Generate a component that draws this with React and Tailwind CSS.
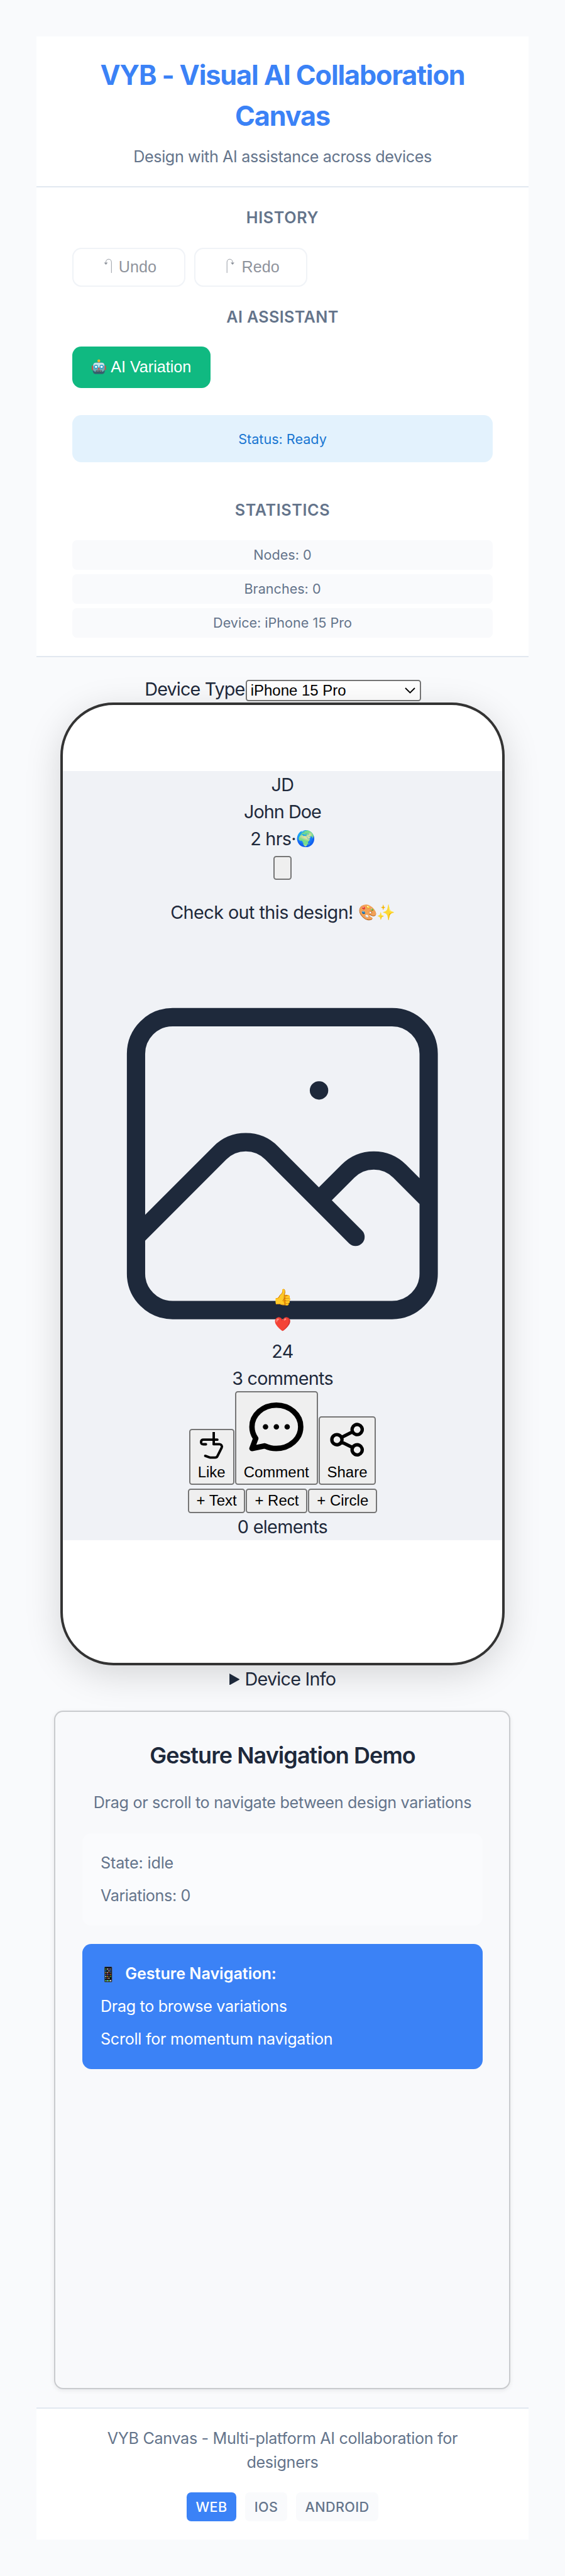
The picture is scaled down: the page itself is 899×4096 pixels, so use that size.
const heading =
  "text-center text-[25.17px] leading-[37.76px] font-semibold text-[#64748b] uppercase";
const stat =
  "h-[46.75px] rounded-[7.2px] bg-[#f9fafc] text-center text-[21.58px] leading-[47.4px] text-[#64748b]";
const row = "flex h-[43.15px] items-center justify-center";
const native =
  "rounded-[4.5px] border-2 border-[#767676] bg-[#efefef] font-['Liberation_Sans',Arial,sans-serif] text-[23.97px] text-black";

function Robot() {
  return (
    <svg className="h-[24px] w-[22.5px] shrink-0" viewBox="0 0 25 26" aria-hidden="true">
      <rect x="0" y="11" width="3" height="8" rx="1" fill="#e0453a" />
      <rect x="22" y="11" width="3" height="8" rx="1" fill="#e0453a" />
      <path d="M10 5h5v3h-5z" fill="#7a4a8c" />
      <circle cx="12.5" cy="2.6" r="2.5" fill="#f4b62c" />
      <rect x="2" y="6" width="21" height="20" rx="5" fill="#35616f" />
      <rect x="2" y="6" width="21" height="16" rx="5" fill="#6fa9b4" />
      <rect x="3" y="6" width="19" height="8" rx="4" fill="#c4e4e6" />
      <circle cx="7.6" cy="13.3" r="3.6" fill="#27a0c9" />
      <circle cx="17.4" cy="13.3" r="3.6" fill="#27a0c9" />
      <circle cx="7.6" cy="13.3" r="2" fill="#fff" />
      <circle cx="17.4" cy="13.3" r="2" fill="#fff" />
      <path d="M12.5 14l2 4h-4z" fill="#e0453a" />
      <rect x="7.5" y="19.5" width="10" height="2.6" rx="1" fill="#3a3337" />
      <path d="M9.5 19.7v2.2M12.5 19.7v2.2M15.5 19.7v2.2" stroke="#d8e4e4" strokeWidth="1" />
    </svg>
  );
}

const APP_COLORS = [
  ["#4cd137", "#fff", "#b57edc", "#9aa0a6"],
  ["#26a4f5", "#555", "#e8ecf0", "#3b82f6"],
  ["#f5b041", "#f3f3f3", "#e74c3c", "#777"],
  ["#3498db", "#e83ea8", "#3a5fcd", "#f97316"],
  ["#f6f6f6", "#f1c40f", "#666", "#4cd137"],
  ["#26a4f5", "#e74c3c", "#fff", "#111"],
];

function Phone() {
  return (
    <svg className="h-[25px] w-[12.4px] shrink-0" viewBox="0 0 14 28" aria-hidden="true">
      <rect x="0.4" y="0.4" width="13.2" height="27.2" rx="1.4" fill="#0b0b0d" stroke="#54504c" strokeWidth="0.8" />
      {APP_COLORS.map((line, y) =>
        line.map((fill, x) => (
          <rect key={`${x}-${y}`} x={1.6 + x * 2.9} y={3.4 + y * 3.3} width="1.9" height="1.8" rx="0.4" fill={fill} />
        ))
      )}
      <rect x="1.4" y="23.8" width="11.2" height="2.8" fill="#3d4a4a" />
      <path d="M1.6 25.2h2M7.4 25.2h2" stroke="#4cd137" strokeWidth="2" />
      <path d="M4.5 25.2h2" stroke="#5ac8fa" strokeWidth="2" />
      <path d="M10.3 25.2h2" stroke="#fff" strokeWidth="2" />
    </svg>
  );
}

function HookArrow({ flip }) {
  return (
    <svg
      className={flip ? "h-[23.4px] w-[13.5px] shrink-0 -scale-x-100" : "h-[23.4px] w-[13.5px] shrink-0"}
      viewBox="0 0 15 26"
      fill="none"
      stroke="currentColor"
      aria-hidden="true"
    >
      <path d="M13.7 25.5V6.5C13.7 3 11.5 1.3 8.8 1.3S3.9 3 3.9 6.5v1" strokeWidth="1" />
      <path d="M.6 7.2h6.6L3.9 11z" fill="currentColor" stroke="none" />
    </svg>
  );
}

function Header() {
  return (
    <header className="h-[240.93px] border-b-2 border-[#e2e8f0] bg-white pt-[29.5px] text-center">
      <h1 className="text-[43.15px] leading-[64.73px] font-bold tracking-[-0.026em] text-[#3b82f6]">
        VYB - Visual AI Collaboration
        <br />
        Canvas
      </h1>
      <p className="mt-[14.38px] text-[25.17px] leading-[37.76px] tracking-[-0.0147em] text-[#64748b]">
        Design with AI assistance across devices
      </p>
    </header>
  );
}

function HistoryButton({ label, flip, pad }) {
  return (
    <button
      className={`flex h-[62.48px] w-[179.8px] items-center gap-[10.8px] rounded-[14.4px] border-2 border-[#e2e8f0] bg-white font-['Liberation_Sans',Arial,sans-serif] text-[25.17px] text-[#1e293b] opacity-50 ${pad}`}
    >
      <span className="-mt-[4px] flex">
        <HookArrow flip={flip} />
      </span>
      {label}
    </button>
  );
}

function Controls() {
  return (
    <section className="flex h-[746.17px] flex-col border-b-2 border-[#e2e8f0] bg-white px-[57.54px] pt-[29.4px]">
      <h3 className={`${heading} tracking-[0.025em]`}>History</h3>
      <div className="mt-[28.14px] flex gap-[14.38px]">
        <HistoryButton label="Undo" pad="pl-[47.5px]" />
        <HistoryButton label="Redo" flip pad="pl-[49px]" />
      </div>
      <h3 className={`${heading} mt-[29.4px] tracking-[0.0142em]`}>AI Assistant</h3>
      <button className="mt-[28.14px] flex h-[65.18px] w-[220.3px] items-center gap-[7.2px] rounded-[14.4px] bg-[#10b981] pl-[31.4px] font-['Liberation_Sans',Arial,sans-serif] text-[25.17px] whitespace-nowrap text-white">
        <span className="-mt-[3px] flex">
          <Robot />
        </span>
        AI Variation
      </button>
      <div className="mt-[43.15px] h-[75.5px] rounded-[14.4px] bg-[#e3f2fd] text-center text-[21.58px] leading-[76px] text-[#1976d2]">
        Status: Ready
      </div>
      <h3 className={`${heading} mt-[58.2px] tracking-[0.025em]`}>Statistics</h3>
      <div className="mt-[28.14px] flex flex-col gap-[7.19px]">
        <div className={stat}>Nodes: 0</div>
        <div className={stat}>Branches: 0</div>
        <div className={stat}>Device: iPhone 15 Pro</div>
      </div>
    </section>
  );
}

function DeviceSelect() {
  return (
    <div className="flex h-[43.15px] items-center justify-center">
      <span className="w-[161.4px] pt-[1px] pl-[1px] tracking-[-0.0301em] whitespace-nowrap">Device Type</span>
      <div className="mt-[5.4px] flex h-[34px] w-[279px] items-center justify-between rounded-[4.5px] border-2 border-[#767676] bg-white pr-[6.5px] pl-[6px] font-['Liberation_Sans',Arial,sans-serif] text-[23.97px] leading-none text-black">
        iPhone 15 Pro
        <svg className="h-[10px] w-[17px]" viewBox="0 0 17 10" fill="none" stroke="currentColor" strokeWidth="1.8">
          <path d="M1 1l7.5 7.4L16 1" />
        </svg>
      </div>
    </div>
  );
}

function PhotoIcon() {
  return (
    <svg
      className="size-[698.5px] shrink-0"
      viewBox="0 0 24 24"
      fill="none"
      stroke="currentColor"
      strokeWidth="1"
      strokeLinecap="round"
      strokeLinejoin="round"
    >
      <path d="M4 16l4.586-4.586a2 2 0 012.828 0L16 16m-2-2l1.586-1.586a2 2 0 012.828 0L20 14m-6-6h.01M6 20h12a2 2 0 002-2V6a2 2 0 00-2-2H6a2 2 0 00-2 2v12a2 2 0 002 2z" />
    </svg>
  );
}

function ActionIcon({ className, d }) {
  return (
    <svg
      className={className}
      viewBox="0 0 24 24"
      fill="none"
      stroke="currentColor"
      strokeWidth="2"
      strokeLinecap="round"
      strokeLinejoin="round"
    >
      {d.map((path) => (
        <path key={path} d={path} />
      ))}
    </svg>
  );
}

function Post() {
  return (
    <div className="h-[1222.64px] bg-[#f0f2f6]">
      <div className={`${row} tracking-[-0.025em]`}>JD</div>
      <div className={`${row} tracking-[-0.0338em]`}>John Doe</div>
      <div className={`${row} gap-px`}>
        <span className="tracking-[-0.025em]">2 hrs·</span>
        <span className="flex w-[29px] justify-center text-[24.8px]">🌍</span>
      </div>
      <div className="flex h-[73.7px] justify-center pt-[5.7px]">
        <button className={`${native} h-[38.2px] w-[28.8px]`} aria-label="More" />
      </div>
      <p className={`${row} mb-[28.77px]`}>
        <span className="tracking-[-0.0195em]">Check out this design!</span>
        <span className="ml-[8.5px] flex w-[29px] justify-center text-[24.3px]">🎨</span>
        <span className="flex w-[28.5px] justify-center text-[23.9px]">✨</span>
      </p>
      <div className="flex h-[539.4px] items-start justify-center">
        <PhotoIcon />
      </div>
      <div className={`${row} relative text-[25px]`}>👍</div>
      <div className={`${row} relative text-[21.8px]`}>❤️</div>
      <div className={`${row} tracking-[-0.025em]`}>24</div>
      <div className={`${row} tracking-[-0.0254em]`}>3 comments</div>
      <div className="flex h-[148.3px] items-end justify-center gap-px">
        <button className={`${native} flex h-[89px] w-[72px] flex-col items-center justify-between pt-[2.2px] pb-[5px]`}>
          <ActionIcon
            className="size-[46.4px]"
            d={[
              "M14 10h4.764a2 2 0 011.789 2.894l-3.5 7A2 2 0 0115.263 21h-4.017c-.163 0-.326-.02-.485-.06L7 19.6",
              "M14 10V0",
              "M17 6.3H5.6c-1.5 0-2 .5-2 2s.5 1.8 2 1.8h2",
            ]}
          />
          <span className="leading-[27px]">Like</span>
        </button>
        <button className={`${native} flex h-[149px] w-[132px] flex-col items-center justify-between pt-[2.8px] pb-[5px]`}>
          <ActionIcon
            className="size-[103.4px]"
            d={[
              "M8 12h.01M12 12h.01M16 12h.01M21 12c0 4.418-4.03 8-9 8a9.863 9.863 0 01-4.255-.949L3 20l1.395-3.72C3.512 15.042 3 13.574 3 12c0-4.418 4.03-8 9-8s9 3.582 9 8z",
            ]}
          />
          <span className="leading-[27px]">Comment</span>
        </button>
        <button className={`${native} flex h-[109.3px] w-[91.6px] flex-col items-center justify-between pt-[3.2px] pb-[5px]`}>
          <ActionIcon
            className="size-[64.4px]"
            d={[
              "M8.684 13.342C8.886 12.938 9 12.482 9 12c0-.482-.114-.938-.316-1.342m0 2.684a3 3 0 110-2.684m0 2.684l6.632 3.316m-6.632-6l6.632-3.316m0 0a3 3 0 105.367-2.684 3 3 0 00-5.367 2.684zm0 9.316a3 3 0 105.368 2.684 3 3 0 00-5.368-2.684z",
            ]}
          />
          <span className="leading-[27px]">Share</span>
        </button>
      </div>
      <div className="flex h-[44.1px] items-end justify-center gap-px">
        <button className={`${native} h-[38.4px] w-[91.6px] leading-none`}>+ Text</button>
        <button className={`${native} h-[38.4px] w-[98px] leading-none`}>+ Rect</button>
        <button className={`${native} h-[38.4px] w-[109.7px] leading-none`}>+ Circle</button>
      </div>
      <div className={`${row} tracking-[-0.0233em]`}>0 elements</div>
    </div>
  );
}

function GestureCard() {
  return (
    <section className="mx-auto mt-[28.77px] flex h-[1078.8px] w-[726px] flex-col gap-[28.77px] rounded-[14.4px] border-2 border-[#c9cbce] bg-[#f8f9fb] px-[42.7px] pt-[43px] text-[25.17px] leading-[37.76px] text-[#64748b] shadow-[0_2px_7px_rgba(0,0,0,0.08)]">
      <h2 className="text-center text-[35.96px] leading-[53.94px] font-semibold tracking-[-0.0257em] text-[#1e293b]">
        Gesture Navigation Demo
      </h2>
      <p className="text-center tracking-[-0.0125em] whitespace-nowrap">
        Drag or scroll to navigate between design variations
      </p>
      <div className="flex flex-col gap-[14.38px] rounded-[14.4px] bg-[#fafbfd] px-[28.77px] pt-[29.4px] pb-[28.14px]">
        <p className="tracking-[-0.006em]">State: idle</p>
        <p className="tracking-[-0.0152em]">Variations: 0</p>
      </div>
      <div className="flex flex-col gap-[14.38px] rounded-[14.4px] bg-[#3b82f6] px-[28.77px] pt-[29.4px] pb-[28.14px] text-white">
        <p className="flex items-center gap-[20.5px] pl-[6.3px] font-semibold tracking-[-0.0013em]">
          <Phone />
          Gesture Navigation:
        </p>
        <p className="tracking-[-0.0127em]">Drag to browse variations</p>
        <p className="tracking-[-0.0109em]">Scroll for momentum navigation</p>
      </div>
    </section>
  );
}

function Footer() {
  return (
    <footer className="mt-[28.77px] h-[210.37px] border-t-2 border-[#e2e8f0] bg-white pt-[29.2px] text-center text-[#64748b]">
      <p className="text-[25.17px] leading-[37.76px] tracking-[-0.0133em]">
        VYB Canvas - Multi-platform AI collaboration for
        <br />
        designers
      </p>
      <div className="mt-[28.14px] flex justify-center gap-[14.38px] text-[21.58px] leading-[46.75px] font-medium tracking-[0.02em]">
        <span className="rounded-[7.2px] bg-[#3b82f6] px-[14.38px] text-white">WEB</span>
        <span className="rounded-[7.2px] bg-[#f9fafc] px-[14.38px]">IOS</span>
        <span className="rounded-[7.2px] bg-[#f9fafc] px-[14.38px]">ANDROID</span>
      </div>
    </footer>
  );
}

export default function App() {
  return (
    <div className="h-[4096px] overflow-hidden bg-[#f9fafc] py-[57.54px] font-['Inter',sans-serif] text-[28.77px] leading-[43.15px] text-[#1e293b]">
      <div className="mx-auto w-[783.93px]">
        <Header />
        <Controls />
        <main className="pt-[28.77px]">
          <DeviceSelect />
          <div className="relative mx-auto h-[1531.9px] w-[706.6px] overflow-hidden rounded-[84.5px] border-4 border-[#333] bg-white pt-[105.68px] shadow-[0_14px_57px_rgba(0,0,0,0.15)]">
            <Post />
          </div>
          <div className="relative flex h-[43.15px] items-center justify-center gap-[8px]">
            <svg className="h-[18.6px] w-[16.8px]" viewBox="0 0 17 19" fill="currentColor" aria-hidden="true">
              <path d="M0 0l17 9.5L0 19z" />
            </svg>
            <span className="tracking-[-0.0263em]">Device Info</span>
          </div>
          <GestureCard />
        </main>
        <Footer />
      </div>
    </div>
  );
}
